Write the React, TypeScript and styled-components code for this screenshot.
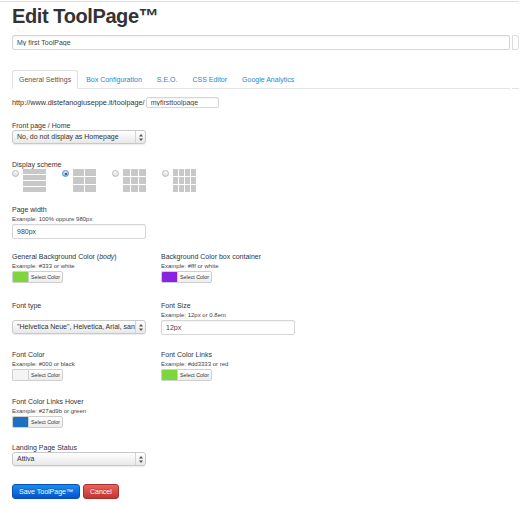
import React from "react";
import styled, { createGlobalStyle, css } from "styled-components";

const GlobalStyle = createGlobalStyle`
  html, body {
    margin: 0;
    padding: 0;
    background: #fff;
  }
  body {
    font-family: "Liberation Sans", Arial, sans-serif;
    font-size: 7px;
    color: #333;
  }
  * {
    box-sizing: border-box;
  }
`;

const Page = styled.div`
  width: 519px;
  margin-top: 1px;
  border-top: 1px solid #dedede;
  padding: 0 0 8px 12px;
`;

const Title = styled.h1`
  margin: 2px 0 0;
  font-size: 20px;
  line-height: 24px;
  font-weight: bold;
  color: #333;
  letter-spacing: -0.4px;

  & small {
    font-size: 15px;
    letter-spacing: 0;
  }
`;

const SplitRow = styled.div<{ $top: number }>`
  display: flex;
  gap: 2px;
  margin-top: ${(p) => p.$top}px;
`;

const Stub = styled.div<{ $tab?: boolean }>`
  width: 7px;
  flex: none;
  ${(p) =>
    p.$tab
      ? css`
          border-bottom: 1px solid #e4e4e4;
        `
      : css`
          height: 15px;
          border: 1px solid #dcdcdc;
          border-radius: 0 3px 3px 0;
        `}
`;

const TextInput = styled.input<{ $width?: number; $height?: number }>`
  display: block;
  width: ${(p) => (p.$width ? `${p.$width}px` : "100%")};
  height: ${(p) => p.$height ?? 15}px;
  flex: ${(p) => (p.$width ? "none" : "1")};
  margin: 0;
  padding: 0 4px;
  border: 1px solid #d6d6d6;
  border-radius: 2px;
  box-shadow: inset 0 1px 1px rgba(0, 0, 0, 0.05);
  background: #fff;
  font-family: "Liberation Sans", Arial, sans-serif;
  font-size: 7px;
  color: #444;
  outline: none;
`;

const TabBar = styled.ul`
  flex: 1;
  display: flex;
  margin: 0;
  padding: 0;
  list-style: none;
  border-bottom: 1px solid #e4e4e4;
`;

const Tab = styled.li<{ $active?: boolean }>`
  height: 19px;
  margin: 0 1px -1px 0;
  padding: 0 6px;
  line-height: 17px;
  border: 1px solid transparent;
  border-radius: 3px 3px 0 0;
  color: #1e86d6;
  white-space: nowrap;
  ${(p) =>
    p.$active &&
    css`
      border-color: #e0e0e0;
      border-bottom-color: #fff;
      background: #fff;
      color: #555;
    `}
`;

const UrlRow = styled.div`
  display: flex;
  align-items: center;
  gap: 1px;
  height: 11px;
  margin-top: 8px;
`;

const UrlText = styled.span`
  font-size: 7.3px;
  color: #333;
  white-space: nowrap;
`;

const FieldRow = styled.div<{ $top: number }>`
  display: grid;
  grid-template-columns: 149px 149px;
  margin-top: ${(p) => p.$top}px;
`;

const Field = styled.div`
  display: flex;
  flex-direction: column;
  align-items: flex-start;
`;

const Label = styled.label`
  display: block;
  font-size: 7px;
  line-height: 9px;
  color: #333;
  white-space: nowrap;

  & i {
    font-style: italic;
  }
`;

const Help = styled.span`
  display: block;
  height: 10px;
  font-size: 6px;
  line-height: 10px;
  color: #444;
  white-space: nowrap;
`;

const SelectBox = styled.div`
  display: flex;
  align-items: stretch;
  width: 134px;
  height: 14px;
  border: 1px solid #c9c9c9;
  border-radius: 3px;
  background: linear-gradient(#ffffff, #e8e8e8);
  box-shadow: 0 1px 1px rgba(0, 0, 0, 0.08);
  overflow: hidden;
`;

const SelectText = styled.span`
  flex: 1;
  min-width: 0;
  padding-left: 4px;
  line-height: 12px;
  font-size: 7px;
  color: #333;
  white-space: nowrap;
  overflow: hidden;
  text-overflow: clip;
`;

const SelectArrows = styled.span`
  width: 10px;
  flex: none;
  display: flex;
  align-items: center;
  justify-content: center;
  border-left: 1px solid #d4d4d4;
`;

const SchemeList = styled.div`
  display: flex;
  height: 23px;
`;

const SchemeOption = styled.div`
  display: flex;
  align-items: flex-start;
  gap: 4px;
  margin-right: 16px;
`;

const Radio = styled.span<{ $checked?: boolean }>`
  position: relative;
  width: 7px;
  height: 7px;
  margin-top: 1px;
  border-radius: 50%;
  border: 1px solid #b8b8b8;
  background: linear-gradient(#ffffff, #dcdcdc);
  ${(p) =>
    p.$checked &&
    css`
      border-color: #5a8ed2;
      background: linear-gradient(#d6e8fb, #86b6ec);
      &::after {
        content: "";
        position: absolute;
        left: 1.5px;
        top: 1.5px;
        width: 2px;
        height: 2px;
        border-radius: 50%;
        background: #1f3a60;
      }
    `}
`;

const ColorPicker = styled.div`
  display: flex;
  height: 12px;
`;

const Swatch = styled.span<{ $color: string }>`
  width: 16px;
  border: 1px solid #cfcfcf;
  border-right: none;
  border-radius: 2px 0 0 2px;
  background: ${(p) => p.$color};
`;

const PickButton = styled.span`
  width: 35px;
  display: flex;
  align-items: center;
  justify-content: center;
  border: 1px solid #cfcfcf;
  border-radius: 0 2px 2px 0;
  background: linear-gradient(#ffffff, #ededed);
  font-size: 5.3px;
  color: #333;
`;

const Actions = styled.div`
  display: flex;
  gap: 3px;
  margin-top: 18px;
`;

const Button = styled.button<{ $variant: "primary" | "danger" }>`
  height: 15px;
  margin: 0;
  padding: 0 6px;
  border-radius: 3px;
  font-family: "Liberation Sans", Arial, sans-serif;
  font-size: 7px;
  color: #fff;
  text-shadow: 0 -1px 0 rgba(0, 0, 0, 0.25);
  cursor: pointer;
  ${(p) =>
    p.$variant === "primary"
      ? css`
          border: 1px solid #0a4fb8;
          background: linear-gradient(#168ff0, #0751cf);
        `
      : css`
          border: 1px solid #a8302a;
          background: linear-gradient(#ee615c, #c0372f);
        `}
`;

const Arrows = () => (
  <svg width="4" height="7" viewBox="0 0 4 7">
    <path d="M2 0 L4 2.6 L0 2.6 Z" fill="#555" />
    <path d="M2 7 L4 4.4 L0 4.4 Z" fill="#555" />
  </svg>
);

const Select: React.FC<{ value: string }> = ({ value }) => (
  <SelectBox>
    <SelectText>{value}</SelectText>
    <SelectArrows>
      <Arrows />
    </SelectArrows>
  </SelectBox>
);

// columns x rows of the page layout thumbnail
const SchemeThumb: React.FC<{ cols: number; rows: number }> = ({ cols, rows }) => {
  const cw = (23 - (cols - 1)) / cols;
  const rh = (23 - (rows - 1)) / rows;
  const cells = [];
  for (let r = 0; r < rows; r++) {
    for (let c = 0; c < cols; c++) {
      cells.push(
        <rect key={`${r}-${c}`} x={c * (cw + 1)} y={r * (rh + 1)} width={cw} height={rh} fill="#c8c8c8" />
      );
    }
  }
  return (
    <svg width="23" height="23" viewBox="0 0 23 23">
      {cells}
    </svg>
  );
};

const schemes = [
  { cols: 1, rows: 4, checked: false },
  { cols: 2, rows: 3, checked: true },
  { cols: 3, rows: 3, checked: false },
  { cols: 4, rows: 3, checked: false },
];

const ColorField: React.FC<{ label: React.ReactNode; help: string; color: string }> = ({ label, help, color }) => (
  <Field>
    <Label>{label}</Label>
    <Help>{help}</Help>
    <ColorPicker>
      <Swatch $color={color} />
      <PickButton>Select Color</PickButton>
    </ColorPicker>
  </Field>
);

const tabs = ["General Settings", "Box Configuration", "S.E.O.", "CSS Editor", "Google Analytics"];

export default function App() {
  return (
    <>
      <GlobalStyle />
      <Page>
        <Title>Edit ToolPage™</Title>

        <SplitRow $top={7}>
          <TextInput readOnly value="My first ToolPage" />
          <Stub />
        </SplitRow>

        <SplitRow $top={20}>
          <TabBar>
            {tabs.map((t, i) => (
              <Tab key={t} $active={i === 0}>
                {t}
              </Tab>
            ))}
          </TabBar>
          <Stub $tab />
        </SplitRow>

        <UrlRow>
          <UrlText>http://www.distefanogiuseppe.it/toolpage/</UrlText>
          <TextInput readOnly value="myfirsttoolpage" $width={73} $height={11} />
        </UrlRow>

        <FieldRow $top={13}>
          <Field>
            <Label>Front page / Home</Label>
            <Select value="No, do not display as Homepage" />
          </Field>
        </FieldRow>

        <FieldRow $top={16}>
          <Field>
            <Label>Display scheme</Label>
            <SchemeList>
              {schemes.map((s, i) => (
                <SchemeOption key={i}>
                  <Radio $checked={s.checked} />
                  <SchemeThumb cols={s.cols} rows={s.rows} />
                </SchemeOption>
              ))}
            </SchemeList>
          </Field>
        </FieldRow>

        <FieldRow $top={13}>
          <Field>
            <Label>Page width</Label>
            <Help>Example: 100% oppure 980px</Help>
            <TextInput readOnly value="980px" $width={134} />
          </Field>
        </FieldRow>

        <FieldRow $top={13}>
          <ColorField
            label={
              <>
                General Background Color (<i>body</i>)
              </>
            }
            help="Example: #333 or white"
            color="#7dd63c"
          />
          <ColorField label="Background Color box container" help="Example: #fff or white" color="#8a23e0" />
        </FieldRow>

        <FieldRow $top={18}>
          <Field>
            <Label>Font type</Label>
            <Help />
            <Select value={'"Helvetica Neue", Helvetica, Arial, sans-serif'} />
          </Field>
          <Field>
            <Label>Font Size</Label>
            <Help>Example: 12px or 0.8em</Help>
            <TextInput readOnly value="12px" $width={134} />
          </Field>
        </FieldRow>

        <FieldRow $top={15}>
          <ColorField label="Font Color" help="Example: #000 or black" color="#f4f4f4" />
          <ColorField label="Font Color Links" help="Example: #dd3333 or red" color="#7dd63c" />
        </FieldRow>

        <FieldRow $top={16}>
          <ColorField label="Font Color Links Hover" help="Example: #27ad9b or green" color="#1d70c2" />
        </FieldRow>

        <FieldRow $top={15}>
          <Field>
            <Label>Landing Page Status</Label>
            <Select value="Attiva" />
          </Field>
        </FieldRow>

        <Actions>
          <Button $variant="primary">Save ToolPage™</Button>
          <Button $variant="danger">Cancel</Button>
        </Actions>
      </Page>
    </>
  );
}
